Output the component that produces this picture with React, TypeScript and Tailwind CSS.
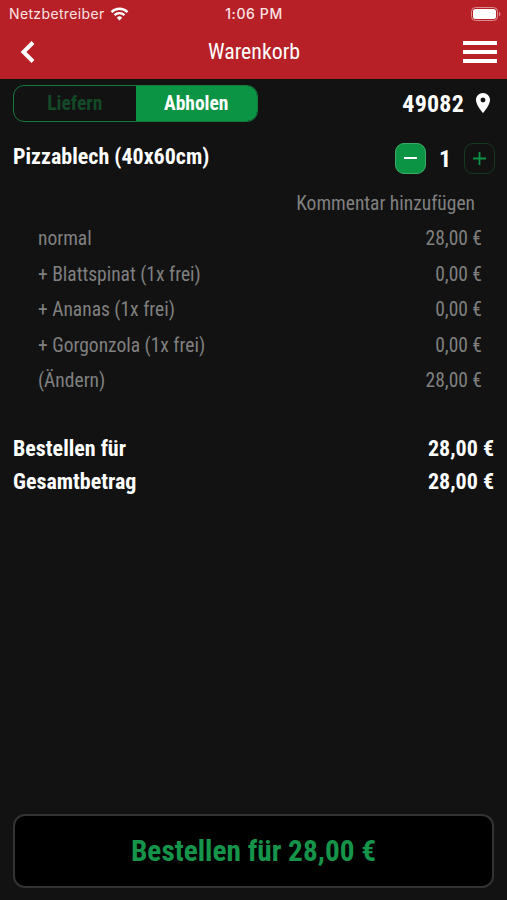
import { MdLocationOn } from "react-icons/md";

type CartLine = { label: string; price: string };

const lines: CartLine[] = [
  { label: "normal", price: "28,00 €" },
  { label: "+ Blattspinat (1x frei)", price: "0,00 €" },
  { label: "+ Ananas (1x frei)", price: "0,00 €" },
  { label: "+ Gorgonzola (1x frei)", price: "0,00 €" },
  { label: "(Ändern)", price: "28,00 €" },
];

const totals: CartLine[] = [
  { label: "Bestellen für", price: "28,00 €" },
  { label: "Gesamtbetrag", price: "28,00 €" },
];

function StatusBar() {
  return (
    <div className="grid h-[27px] grid-cols-3 items-center pl-[9px] pr-[6px] font-[Inter,sans-serif] text-[14px] text-[#fbe3e4]">
      <div className="flex items-center gap-[5px]">
        <span className="tracking-[0.36px]">Netzbetreiber</span>
        <svg width="19" height="14" viewBox="0 0 18 14" fill="none" stroke="white" strokeWidth="2.4">
          <path d="M1 5.1a11.3 11.3 0 0 1 16 0" />
          <path d="M4 8.2a7 7 0 0 1 10 0" />
          <path d="M9 13.4 6.3 10.7a3.8 3.8 0 0 1 5.4 0Z" fill="white" stroke="none" />
        </svg>
      </div>
      <span className="pr-[2px] text-center font-medium tracking-[0.6px]">1:06 PM</span>
      <svg className="justify-self-end" width="30" height="14" viewBox="0 0 30 14">
        <rect x="0.5" y="0.5" width="26" height="13" rx="4" fill="none" stroke="#dc8d91" />
        <rect x="2" y="2" width="23" height="10" rx="2.5" fill="white" />
        <path d="M28 4.5q3 2.5 0 5Z" fill="#dc8d91" />
      </svg>
    </div>
  );
}

export default function App() {
  return (
    <div className="flex h-[900px] w-[507px] flex-col bg-[#121212] font-['Roboto_Condensed',Roboto,sans-serif] text-white [font-stretch:75%]">
      <header className="h-[79px] bg-[#b72027]">
        <StatusBar />
        <div className="grid h-[49px] grid-cols-3 items-center pl-[20px] pr-[10px]">
          <svg width="15" height="22" viewBox="0 0 15 22" fill="none" stroke="white" strokeWidth="4">
            <path d="M13 1.5 3.5 11l9.5 9.5" />
          </svg>
          <h1 className="pr-[9px] pt-[2px] text-center text-[21.8px]">Warenkorb</h1>
          <div className="flex w-[34px] flex-col gap-[5px] justify-self-end">
            <span className="h-1 bg-white" />
            <span className="h-1 bg-white" />
            <span className="h-1 bg-white" />
          </div>
        </div>
      </header>

      <div className="flex items-center justify-between pl-[13px] pr-[12px] pt-[6px]">
        <div className="flex h-[37px] w-[245px] overflow-hidden rounded-[11px] border border-[#14793a] text-[19.5px] font-bold">
          <button className="flex-1 text-[#134a27]">Liefern</button>
          <button className="flex-1 bg-[#0c9445]">Abholen</button>
        </div>
        <div className="flex items-center gap-[7px]">
          <span className="text-[24px] font-bold tracking-[0.2px]">49082</span>
          <MdLocationOn className="mb-[2px] size-[24px]" />
        </div>
      </div>

      <div className="flex h-[66px] justify-between pl-[13px] pr-[12px] pt-[20px]">
        <h2 className="text-[22px] font-bold leading-[29px]">Pizzablech (40x60cm)</h2>
        <div className="flex h-[32px] items-center">
          <button className="grid size-[31px] place-items-center rounded-[9px] border border-[#3dab68] bg-[#0c9445]">
            <span className="h-[2px] w-[13px] bg-white" />
          </button>
          <span className="w-[38px] pt-px text-center text-[24px] font-bold">1</span>
          <button className="grid size-[31px] place-items-center rounded-[9px] border border-[#123a22]">
            <svg width="13" height="13" viewBox="0 0 13 13" stroke="#0c9445" strokeWidth="1.8">
              <path d="M6.5 0v13M0 6.5h13" />
            </svg>
          </button>
        </div>
      </div>

      <section className="-mt-[2px] pl-[38px] pr-[25px] text-[19.5px] leading-[35.4px] text-[#808080]">
        <p className="pr-[7px] text-right">Kommentar hinzufügen</p>
        {lines.map((line) => (
          <div key={line.label} className="flex justify-between">
            <span>{line.label}</span>
            <span>{line.price}</span>
          </div>
        ))}
      </section>

      <section className="mt-[34px] pl-[13px] pr-[13px] text-[22px] font-bold leading-[33px]">
        {totals.map((line) => (
          <div key={line.label} className="flex justify-between">
            <span>{line.label}</span>
            <span>{line.price}</span>
          </div>
        ))}
      </section>

      <button className="mx-[13px] mb-[12px] mt-auto h-[74px] rounded-[12px] border-2 border-[#333] bg-black pt-px text-[29.3px] font-bold text-[#15944a]">
        Bestellen für 28,00 €
      </button>
    </div>
  );
}
